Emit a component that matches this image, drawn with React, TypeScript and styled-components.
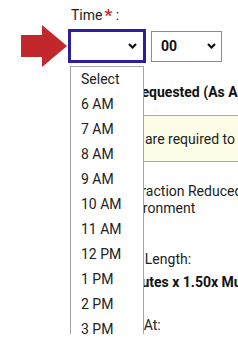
import styled, { createGlobalStyle } from 'styled-components';

const GlobalStyle = createGlobalStyle`
  html, body {
    margin: 0;
    padding: 0;
    overflow: hidden;
    background: #ffffff;
  }
  body {
    font-family: Roboto, 'Liberation Sans', Arial, sans-serif;
    font-size: 14px;
    color: #222222;
  }
`;

const hours = ['6 AM', '7 AM', '8 AM', '9 AM', '10 AM', '11 AM', '12 PM', '1 PM', '2 PM', '3 PM', '4 PM'];

const Chevron = () => (
  <svg width="9" height="6" viewBox="0 0 9 6">
    <path d="M1 1 L4.5 4.5 L8 1" fill="none" stroke="#111" strokeWidth="2.2" />
  </svg>
);

const App = () => {
  return (
    <Page>
      <GlobalStyle />
      <Label>
        Time<Star>*</Star> :
      </Label>

      <PickerRow>
        <Arrow width="47" height="43" viewBox="0 0 47 43">
          <polygon points="0,10 21,10 21,0 46,21 21,42 21,32 0,32" fill="#c1282c" />
        </Arrow>
        <SelectWrap>
          <HourSelect>
            <span />
            <Chevron />
          </HourSelect>
          <Options>
            <Option>Select</Option>
            {hours.map((h) => (
              <Option key={h}>{h}</Option>
            ))}
          </Options>
        </SelectWrap>
        <MinuteSelect>
          <span>00</span>
          <Chevron />
        </MinuteSelect>
      </PickerRow>

      <Details>
        <BoldLine $top={20} $indent={12}>Service Requested (As Approved)</BoldLine>
        <Note>
          <NoteText>Documents are required to confirm this time slot</NoteText>
        </Note>
        <Feature>Distraction Reduced Environment</Feature>
        <PlainLine $top={33} $indent={12}>Approved Length:</PlainLine>
        <BoldLine $top={5} $indent={20}>120 Minutes x 1.50x Multiplier</BoldLine>
        <PlainLine $top={25} $indent={40}>Start At:</PlainLine>
      </Details>
    </Page>
  );
};

const Page = styled.div`
  width: 420px;
  padding-top: 5px;
`;

const Label = styled.div`
  margin-left: 71px;
  line-height: 18px;
  font-size: 14px;
  color: #222;
`;

const Star = styled.span`
  color: #d1262b;
  font-size: 17px;
  font-weight: bold;
  margin-left: 2px;
  position: relative;
  top: 1px;
`;

const PickerRow = styled.div`
  display: flex;
  align-items: center;
  gap: 5px;
  margin-top: 5px;
  padding-left: 21px;
  height: 34px;
`;

const Arrow = styled.svg`
  flex: none;
  margin-right: -5px;
`;

const SelectWrap = styled.div`
  position: relative;
  width: 78px;
  height: 34px;
`;

const BaseSelect = styled.div`
  box-sizing: border-box;
  display: flex;
  align-items: center;
  justify-content: space-between;
  background: #fff;
  font-weight: bold;
  font-size: 14px;
  color: #111;
`;

const HourSelect = styled(BaseSelect)`
  width: 78px;
  height: 34px;
  border: 3px solid #2d1f9c;
  padding: 0 6px 0 9px;
`;

const MinuteSelect = styled(BaseSelect)`
  width: 71px;
  height: 31px;
  border: 1px solid #8c8c8c;
  padding: 0 5px 0 9px;
`;

const Options = styled.div`
  position: absolute;
  top: 37px;
  left: 2px;
  width: 74px;
  box-sizing: border-box;
  border: 1px solid #a5a5a5;
  border-bottom: none;
  background: #fff;
  z-index: 2;
`;

const Option = styled.div`
  height: 25px;
  line-height: 25px;
  padding-left: 10px;
  font-size: 14px;
  color: #222;
`;

const Details = styled.div`
  margin-left: 70px;
  width: 350px;
`;

const BoldLine = styled.div<{ $top: number; $indent?: number }>`
  margin-top: ${({ $top }) => $top}px;
  padding-left: ${({ $indent }) => $indent ?? 0}px;
  font-weight: bold;
  line-height: 18px;
  white-space: nowrap;
  color: #111;
`;

const PlainLine = styled.div<{ $top: number; $indent?: number }>`
  margin-top: ${({ $top }) => $top}px;
  padding-left: ${({ $indent }) => $indent ?? 0}px;
  line-height: 18px;
  white-space: nowrap;
  color: #222;
`;

const Note = styled.div`
  margin-top: 14px;
  height: 45px;
  display: flex;
  align-items: center;
  background: #fdfde7;
  border-top: 1px solid #a9a9a9;
  border-bottom: 1px solid #a9a9a9;
`;

const NoteText = styled.span`
  white-space: nowrap;
  font-size: 14px;
  color: #222;
`;

const Feature = styled.div`
  margin-top: 21px;
  margin-left: 47px;
  width: 150px;
  line-height: 17px;
  font-size: 14px;
  color: #222;
`;

export default App;
